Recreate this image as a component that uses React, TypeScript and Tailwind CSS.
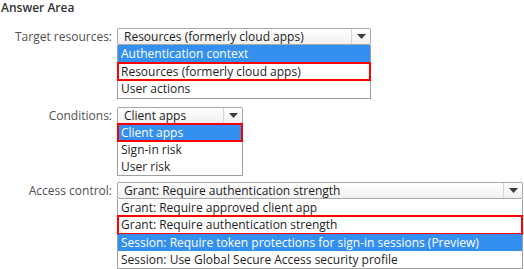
const FONT = "font-['Segoe_UI','Open_Sans','Noto_Sans',sans-serif]"

type Opt = { text: string; selected?: boolean; boxed?: boolean }

function Caret() {
  return (
    <svg width="9" height="5" viewBox="0 0 9 5" className="block">
      <path d="M0 0h9L4.5 5z" fill="#3c3c3c" />
    </svg>
  )
}

function Select({ value, width, opts, rowH }: { value: string; width: string; opts: Opt[]; rowH: string }) {
  return (
    <div className={`flex flex-col ${width}`}>
      <div className="flex h-[17px] items-stretch rounded-[2px] border border-[#a8a8a8] bg-gradient-to-b from-[#ffffff] to-[#f0f0f0]">
        <span className="flex-1 truncate pl-[6px] text-[12px] leading-[15px] text-[#222]">{value}</span>
        <span className="flex w-[19px] items-center justify-center border-l border-[#d6d6d6]">
          <Caret />
        </span>
      </div>
      <ul className="border border-t-0 border-[#a0a0a0] bg-white">
        {opts.map(o => (
          <li
            key={o.text}
            className={`relative ${rowH} pl-[3px] text-[12px] whitespace-nowrap ${
              o.selected ? 'bg-[#3390f0] text-white' : 'text-[#1e1e1e]'
            }`}
          >
            {o.text}
            {o.boxed && (
              <span className="pointer-events-none absolute -inset-x-[1px] -top-[1px] -bottom-[1px] border-2 border-[#ff0000]" />
            )}
          </li>
        ))}
      </ul>
    </div>
  )
}

export default function App() {
  return (
    <div className={`h-[269px] w-[524px] bg-white pt-[1px] ${FONT}`}>
      <p className="pl-[1px] text-[12px] leading-[13px] font-semibold text-[#333]">Answer Area</p>

      <div className="mt-[14px] grid grid-cols-[112px_1fr] gap-x-[5px]">
        <span className="pt-[1px] text-right text-[12px] leading-[15px] text-[#505050]">Target resources:</span>
        <Select
          value="Resources (formerly cloud apps)"
          width="w-[254px]"
          rowH="h-[17.7px] leading-[17px]"
          opts={[
            { text: 'Authentication context', selected: true },
            { text: 'Resources (formerly cloud apps)', boxed: true },
            { text: 'User actions' },
          ]}
        />

        <span className="mt-[8px] pt-[1px] text-right text-[12px] leading-[15px] text-[#505050]">Conditions:</span>
        <div className="mt-[8px]">
          <Select
            value="Client apps"
            width="w-[126px]"
            rowH="h-[17px] leading-[17px]"
            opts={[
              { text: 'Client apps', selected: true, boxed: true },
              { text: 'Sign-in risk' },
              { text: 'User risk' },
            ]}
          />
        </div>

        <span className="mt-[6px] pt-[1px] text-right text-[12px] leading-[15px] text-[#505050]">Access control:</span>
        <div className="mt-[6px]">
          <Select
            value="Grant: Require authentication strength"
            width="w-[406px]"
            rowH="h-[17.3px] leading-[17px]"
            opts={[
              { text: 'Grant: Require approved client app' },
              { text: 'Grant: Require authentication strength', boxed: true },
              { text: 'Session: Require token protections for sign-in sessions (Preview)', selected: true },
              { text: 'Session: Use Global Secure Access security profile' },
            ]}
          />
        </div>
      </div>
    </div>
  )
}
